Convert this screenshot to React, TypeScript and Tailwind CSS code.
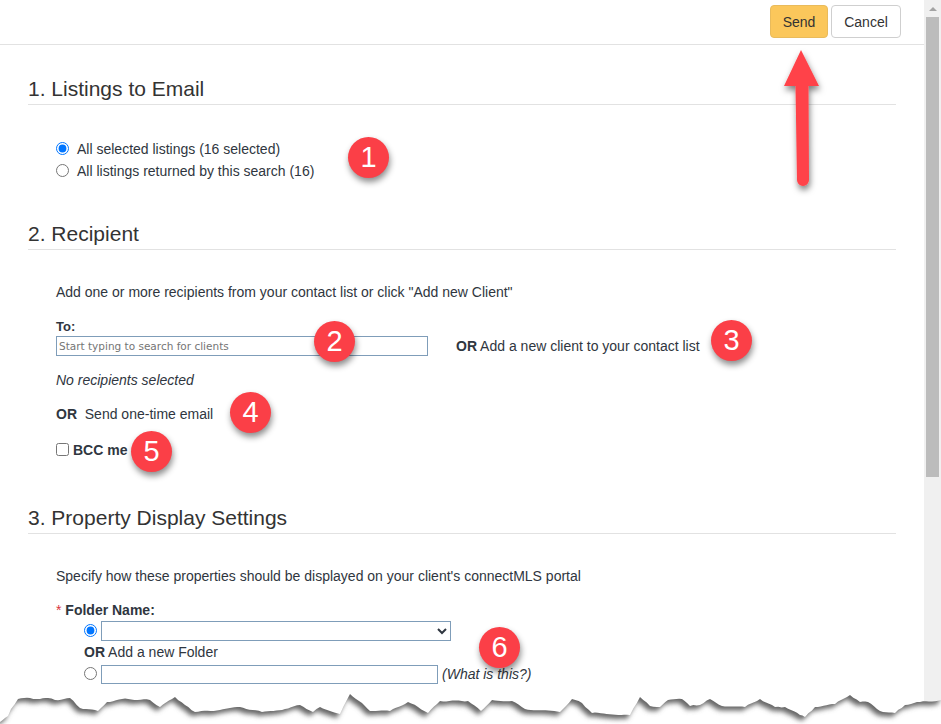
import React from 'react';

const edgePoints: number[][] = [
  [0, 722], [8, 716], [11, 709], [18, 699], [30, 698], [40, 699], [48, 698], [55, 700], [70, 698], [80, 708], [98, 711], [107, 702], [122, 699], [150, 700], [160, 707], [175, 697], [185, 705], [195, 712], [220, 710], [240, 707], [262, 712], [285, 709], [300, 705], [313, 712], [320, 707], [340, 714], [350, 694], [362, 703], [370, 711], [390, 711], [408, 702], [418, 707], [428, 713], [440, 701], [468, 701], [481, 711], [492, 700], [512, 701], [525, 709], [560, 712], [572, 699], [582, 703], [592, 713], [630, 715], [640, 697], [650, 706], [660, 707], [668, 700], [682, 699], [690, 706], [700, 705], [710, 699], [722, 706], [745, 707], [760, 699], [775, 707], [785, 707], [800, 715], [805, 717], [815, 707], [835, 704], [850, 695], [860, 702], [868, 702], [880, 711], [895, 713], [905, 705], [920, 702], [941, 700],
];

// fill in the long segments with small steps so the tear looks rough
const roughEdge = () => {
  const out: string[] = [];
  for (let i = 0; i < edgePoints.length - 1; i++) {
    const [x1, y1] = edgePoints[i];
    const [x2, y2] = edgePoints[i + 1];
    const steps = Math.max(1, Math.round((x2 - x1) / 3));
    for (let s = 0; s < steps; s++) {
      const x = x1 + ((x2 - x1) * s) / steps;
      const y = y1 + ((y2 - y1) * s) / steps;
      const jitter = s === 0 ? 0 : Math.sin(x * 2.3) * 0.6;
      out.push(`${x.toFixed(1)},${(y + jitter).toFixed(1)}`);
    }
  }
  out.push('941,700');
  return out.join(' ');
};
const edge = roughEdge();

const Badge = ({ n, className }: { n: number; className: string }) => (
  <div
    className={`absolute w-[41px] h-[41px] rounded-full bg-[#fb3f47] text-white flex items-center justify-center text-[29px] shadow-[1px_4px_6px_rgba(0,0,0,0.45)] ${className}`}
  >
    {n}
  </div>
);

const Section = ({ title, children }: { title: string; children: React.ReactNode }) => (
  <section>
    <h2 className="text-[21px] leading-[24px] text-[#333] border-b border-[#e2e2e2] pb-[3px]">{title}</h2>
    {children}
  </section>
);

const Radio = ({ checked }: { checked?: boolean }) => (
  <input type="radio" readOnly checked={!!checked} className="w-[13px] h-[13px] m-0 -translate-y-[1px] accent-[#0075ff]" />
);

export default function App() {
  return (
    <div className="relative w-[941px] h-[724px] overflow-hidden bg-white flex font-['Liberation_Sans',Arial,sans-serif] text-[14px] text-[#2f3640]">
      <div className="flex-1 min-w-0">
        {/* Top action bar */}
        <div className="h-[45px] border-b border-[#e2e2e2] flex justify-end items-start gap-[3px] pt-[5px] pr-[23px]">
          <button className="w-[58px] h-[33px] pt-[1px] rounded-[4px] bg-[#fbc75b] border border-[#e9bb5c] text-[#333]">Send</button>
          <button className="w-[70px] h-[33px] pt-[1px] rounded-[4px] bg-white border border-[#cfcfcf] text-[#333]">Cancel</button>
        </div>

        <div className="pl-[28px] pr-[28px] pt-[32px]">
          <Section title="1. Listings to Email">
            <div className="pl-[28px] pt-[33px] h-[117px]">
              <label className="flex items-center gap-[8px] h-[22px]"><Radio checked />All selected listings (16 selected)</label>
              <label className="flex items-center gap-[8px] h-[22px]"><Radio />All listings returned by this search (16)</label>
            </div>
          </Section>

          <Section title="2. Recipient">
            <div className="pl-[28px] pt-[34px] h-[256px]">
              <p className="leading-[16px]">Add one or more recipients from your contact list or click "Add new Client"</p>
              <div className="mt-[20px] font-bold text-[13px] leading-[14px]">To:</div>
              <div className="flex items-center mt-[2px]">
                <input
                  readOnly
                  placeholder="Start typing to search for clients"
                  className="w-[372px] h-[20px] border border-[#7f9db9] px-[2px] font-['DejaVu_Sans',sans-serif] text-[10.5px] placeholder:text-[#757575]"
                />
                <span className="ml-[28px] leading-[16px]"><b>OR</b> Add a new client to your contact list</span>
              </div>
              <p className="italic mt-[16px] leading-[16px]">No recipients selected</p>
              <p className="mt-[18px] leading-[16px]"><b>OR</b>&nbsp; Send one-time email</p>
              <label className="flex items-center gap-[4px] mt-[20px] font-bold leading-[16px]">
                <input type="checkbox" readOnly className="w-[13px] h-[13px] m-0 -translate-y-[1px]" />BCC me
              </label>
            </div>
          </Section>

          <Section title="3. Property Display Settings">
            <div className="pl-[28px] pt-[34px]">
              <p className="leading-[16px]">Specify how these properties should be displayed on your client's connectMLS portal</p>
              <div className="mt-[18px] font-bold leading-[16px]"><span className="text-[#d9363e] font-normal">*</span> Folder Name:</div>
              <div className="pl-[28px]">
                <div className="flex items-center gap-[4px] mt-[3px]">
                  <Radio checked />
                  <select className="w-[350px] h-[20px] border border-[#7f9db9] bg-white" />
                </div>
                <div className="leading-[16px] mt-[3px]"><b>OR</b> Add a new Folder</div>
                <div className="flex items-center gap-[4px] mt-[4px]">
                  <Radio />
                  <input readOnly className="w-[337px] h-[19px] border border-[#7f9db9]" />
                  <i>(What is this?)</i>
                </div>
              </div>
            </div>
          </Section>
        </div>
      </div>

      {/* Browser scrollbar */}
      <div className="w-[17px] bg-[#f0f0f0] flex flex-col shrink-0 items-center">
        <div className="h-[17px] flex items-center justify-center">
          <div className="w-0 h-0 border-x-[4px] border-x-transparent border-b-[4px] border-b-[#a3a3a3]" />
        </div>
        <div className="h-[460px] w-[13px] bg-[#bcbcbc]" />
      </div>

      {/* Annotations */}
      <svg className="absolute left-0 top-0" width="941" height="724" viewBox="0 0 941 724">
        <defs>
          <filter id="arrowShadow" x="-50%" y="-20%" width="200%" height="140%">
            <feDropShadow dx="1" dy="4" stdDeviation="3" floodColor="#000" floodOpacity="0.5" />
          </filter>
          <filter id="tearBlur" x="-5%" y="-10%" width="110%" height="120%">
            <feGaussianBlur stdDeviation="2.4" />
          </filter>
          <clipPath id="belowTear">
            <polygon points={`${edge} 941,724 0,724`} />
          </clipPath>
        </defs>
        <path
          d="M801 50 L819 86 L808.5 86 L809 180 A6 6 0 0 1 797 180 L795.5 86 L784 86 Z"
          fill="#ff4248"
          filter="url(#arrowShadow)"
        />
        <polygon points={`${edge} 941,724 0,724`} fill="#fff" />
        <g clipPath="url(#belowTear)">
          <polygon points={`${edge} 960,640 -20,640`} fill="#666" filter="url(#tearBlur)" transform="translate(-3 4)" />
        </g>
      </svg>

      <Badge n={1} className="left-[348px] top-[137px]" />
      <Badge n={2} className="left-[314px] top-[321px]" />
      <Badge n={3} className="left-[711px] top-[320px]" />
      <Badge n={4} className="left-[230px] top-[392px]" />
      <Badge n={5} className="left-[131px] top-[431px]" />
      <Badge n={6} className="left-[479px] top-[627px]" />
    </div>
  );
}
